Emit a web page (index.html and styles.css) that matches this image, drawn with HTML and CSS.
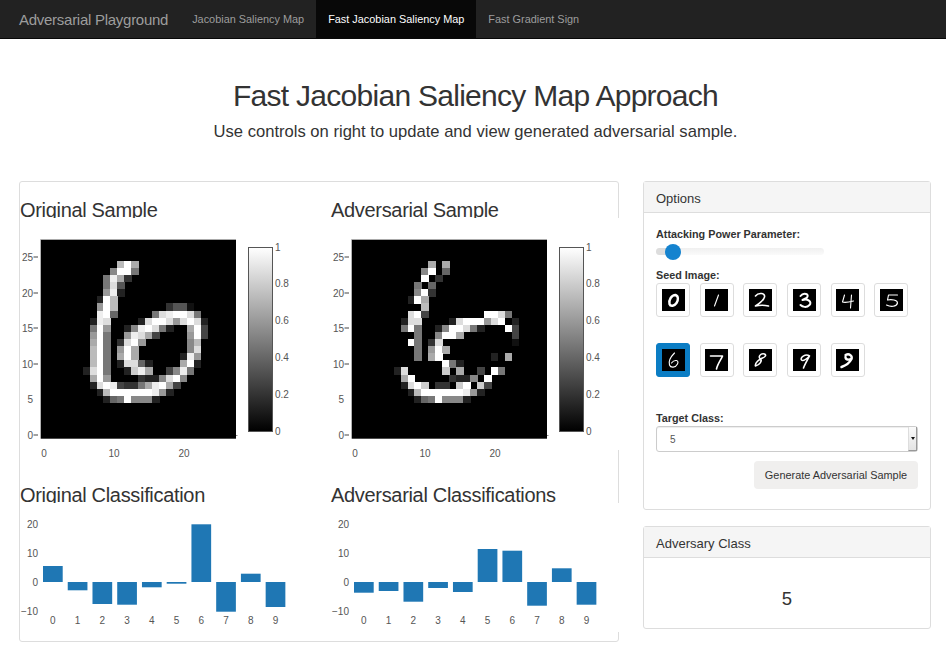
FILE: index.html
```html
<!DOCTYPE html>
<html lang="en">
<head>
<meta charset="utf-8">
<title>Adversarial Playground</title>
<link rel="stylesheet" href="styles.css">
</head>
<body>
<nav class="navbar">
  <a class="brand">Adversarial Playground</a>
  <a class="nav-link">Jacobian Saliency Map</a>
  <a class="nav-link active">Fast Jacobian Saliency Map</a>
  <a class="nav-link">Fast Gradient Sign</a>
</nav>
<header class="hero">
  <h1>Fast Jacobian Saliency Map Approach</h1>
  <p>Use controls on right to update and view generated adversarial sample.</p>
</header>
<main class="layout">
  <section class="plots">
    <div class="plot-cell">
      <h3>Original Sample</h3>
      <svg class="chart heat-chart" viewBox="0 0 290 232">
        <rect class="heat-bg" x="20.7" y="21.3" width="195.3" height="199.4"/>
        <g class="heat-cells" data-set="orig"></g>
        <rect class="heat-top" x="20.7" y="21" width="195.3" height="1"/>
        <rect class="heat-dot" x="216" y="217" width="1.5" height="1"/>
        <rect class="cbar" x="228.5" y="29.5" width="24" height="184"/>
        <g class="tick-marks"><path d="M13.5 39H18M13.5 75H18M13.5 110H18M13.5 146H18M13.5 217H18"/></g>
        <g class="ylabels">
          <text x="13" y="42.5">25</text><text x="13" y="78.5">20</text><text x="13" y="113.5">15</text>
          <text x="13" y="149.5">10</text><text x="13" y="184.5">5</text><text x="13" y="220.5">0</text>
        </g>
        <g class="xlabels"><text x="24" y="238.5">0</text><text x="94" y="238.5">10</text><text x="164" y="238.5">20</text></g>
        <g class="cbar-labels">
          <text x="255" y="32.5">1</text><text x="255" y="68.5">0.8</text><text x="255" y="105.5">0.6</text>
          <text x="255" y="142.5">0.4</text><text x="255" y="179.5">0.2</text><text x="255" y="216.5">0</text>
        </g>
      </svg>
    </div>
    <div class="plot-cell">
      <h3>Adversarial Sample</h3>
      <svg class="chart heat-chart" viewBox="0 0 290 232">
        <rect class="heat-bg" x="20.7" y="21.3" width="195.3" height="199.4"/>
        <g class="heat-cells" data-set="adv"></g>
        <rect class="heat-top" x="20.7" y="21" width="195.3" height="1"/>
        <rect class="heat-dot" x="216" y="217" width="1.5" height="1"/>
        <rect class="cbar" x="228.5" y="29.5" width="24" height="184"/>
        <g class="tick-marks"><path d="M13.5 39H18M13.5 75H18M13.5 110H18M13.5 146H18M13.5 217H18"/></g>
        <g class="ylabels">
          <text x="13" y="42.5">25</text><text x="13" y="78.5">20</text><text x="13" y="113.5">15</text>
          <text x="13" y="149.5">10</text><text x="13" y="184.5">5</text><text x="13" y="220.5">0</text>
        </g>
        <g class="xlabels"><text x="24" y="238.5">0</text><text x="94" y="238.5">10</text><text x="164" y="238.5">20</text></g>
        <g class="cbar-labels">
          <text x="255" y="32.5">1</text><text x="255" y="68.5">0.8</text><text x="255" y="105.5">0.6</text>
          <text x="255" y="142.5">0.4</text><text x="255" y="179.5">0.2</text><text x="255" y="216.5">0</text>
        </g>
      </svg>
    </div>
    <div class="plot-cell">
      <h3>Original Classification</h3>
      <svg class="chart bar-chart" viewBox="0 0 290 129">
        <g class="bars">
          <rect x="23" y="63" width="19.7" height="16"/>
          <rect x="47.74" y="79" width="19.7" height="8.3"/>
          <rect x="72.48" y="79" width="19.7" height="22"/>
          <rect x="97.22" y="79" width="19.7" height="22.7"/>
          <rect x="121.96" y="79" width="19.7" height="5.3"/>
          <rect x="146.7" y="79" width="19.7" height="1.7"/>
          <rect x="171.44" y="21.3" width="19.7" height="57.7"/>
          <rect x="196.18" y="79" width="19.7" height="29.7"/>
          <rect x="220.92" y="70.7" width="19.7" height="8.3"/>
          <rect x="245.66" y="79" width="19.7" height="25"/>
        </g>
        <g class="ylabels">
          <text x="18" y="24.8">20</text><text x="18" y="53.5">10</text><text x="18" y="82.5">0</text><text x="18" y="111.8">−10</text>
        </g>
        <g class="xlabels">
          <text x="32.85" y="120.5">0</text><text x="57.6" y="120.5">1</text><text x="82.3" y="120.5">2</text><text x="107.1" y="120.5">3</text><text x="131.8" y="120.5">4</text>
          <text x="156.5" y="120.5">5</text><text x="181.3" y="120.5">6</text><text x="206" y="120.5">7</text><text x="230.8" y="120.5">8</text><text x="255.5" y="120.5">9</text>
        </g>
      </svg>
    </div>
    <div class="plot-cell">
      <h3>Adversarial Classifications</h3>
      <svg class="chart bar-chart" viewBox="0 0 290 129">
        <g class="bars">
          <rect x="23" y="79" width="19.7" height="10.7"/>
          <rect x="47.74" y="79" width="19.7" height="9"/>
          <rect x="72.48" y="79" width="19.7" height="19.7"/>
          <rect x="97.22" y="79" width="19.7" height="6"/>
          <rect x="121.96" y="79" width="19.7" height="10"/>
          <rect x="146.7" y="46" width="19.7" height="33"/>
          <rect x="171.44" y="47.7" width="19.7" height="31.3"/>
          <rect x="196.18" y="79" width="19.7" height="23.7"/>
          <rect x="220.92" y="65.3" width="19.7" height="13.7"/>
          <rect x="245.66" y="79" width="19.7" height="22.7"/>
        </g>
        <g class="ylabels">
          <text x="18" y="24.8">20</text><text x="18" y="53.5">10</text><text x="18" y="82.5">0</text><text x="18" y="111.8">−10</text>
        </g>
        <g class="xlabels">
          <text x="32.85" y="120.5">0</text><text x="57.6" y="120.5">1</text><text x="82.3" y="120.5">2</text><text x="107.1" y="120.5">3</text><text x="131.8" y="120.5">4</text>
          <text x="156.5" y="120.5">5</text><text x="181.3" y="120.5">6</text><text x="206" y="120.5">7</text><text x="230.8" y="120.5">8</text><text x="255.5" y="120.5">9</text>
        </g>
      </svg>
    </div>
  </section>
  <aside class="sidebar">
    <section class="panel panel-options">
      <div class="panel-heading">Options</div>
      <div class="panel-body options-body">
        <label class="field-label">Attacking Power Parameter:</label>
        <div class="slider"><span class="slider-fill"></span><span class="slider-handle"></span></div>
        <label class="field-label seed-label">Seed Image:</label>
        <div class="seeds">
          <button class="seed"><svg viewBox="0 0 22 22"><path class="d-bold" d="M13 6C9 6 6 11 7 15C8 18 12 17 14 14C16 11 16 7 13 6Z"/></svg></button>
          <button class="seed"><svg viewBox="0 0 22 22"><path class="d-thin" d="M13 6L9 17"/></svg></button>
          <button class="seed"><svg viewBox="0 0 22 22"><path class="d-mid" d="M6 7C9 3 16 4 15 8C14 12 9 15 6 17C10 16 15 16 19 17"/></svg></button>
          <button class="seed"><svg viewBox="0 0 22 22"><path class="d-heavy" d="M7 7C10 3 17 5 13 9L9 11C14 9 19 13 16 16C13 19 9 18 7 16"/></svg></button>
          <button class="seed"><svg viewBox="0 0 22 22"><path class="d-thin" d="M8 6L6 13C9 14 13 13 17 12M15 6L14 19"/></svg></button>
          <button class="seed"><svg viewBox="0 0 22 22"><path class="d-thin" d="M17 6L8 6L7 11C11 10 17 11 17 14C16 18 10 18 6 16"/></svg></button>
          <button class="seed active"><svg viewBox="0 0 22 22"><path class="d-thin" d="M12 4C8 8 6 13 7 16C8 19 13 19 15 15C17 11 12 10 9 14"/></svg></button>
          <button class="seed"><svg viewBox="0 0 22 22"><path class="d-mid" d="M5 7L17 7C16 10 12 15 11 20"/></svg></button>
          <button class="seed"><svg viewBox="0 0 22 22"><path class="d-mid" d="M15 5C11 4 8 8 11 10C13 12 10 16 6 17C5 14 10 10 13 9C16 8 17 6 15 5Z"/></svg></button>
          <button class="seed"><svg viewBox="0 0 22 22"><path class="d-mid" d="M16 7C12 4 6 9 8 11C10 13 14 9 16 7C14 11 11 16 10 19"/></svg></button>
          <button class="seed"><svg viewBox="0 0 22 22"><path class="d-bold" d="M9 6C13 4 16 7 15 10C13 14 8 17 5 18M15 10C12 11 9 11 9 8"/></svg></button>
        </div>
        <label class="field-label target-label">Target Class:</label>
        <div class="select"><span class="select-value">5</span><span class="select-arrow"></span></div>
        <div class="actions"><button class="btn">Generate Adversarial Sample</button></div>
      </div>
    </section>
    <section class="panel panel-result">
      <div class="panel-heading">Adversary Class</div>
      <div class="panel-body result-body">5</div>
    </section>
  </aside>
</main>
<script src="script.js"></script>
</body>
</html>
```
FILE: styles.css
```css
* { box-sizing: border-box; }
body {
  margin: 0;
  background: #fff;
  color: #333;
  font-family: "Liberation Sans", Arial, sans-serif;
  height: 647px;
  overflow: hidden;
}
.navbar {
  display: flex;
  align-items: stretch;
  height: 39px;
  padding-left: 19px;
  background: #222;
  border-bottom: 1px solid #080808;
}
.brand {
  align-self: center;
  margin-right: 12px;
  color: #9d9d9d;
  font-size: 15px;
  letter-spacing: -0.27px;
}
.nav-link {
  display: flex;
  align-items: center;
  padding: 0 12px;
  color: #9d9d9d;
  font-size: 10.9px;
}
.nav-link.active {
  background: #080808;
  color: #fff;
}
.hero {
  height: 142px;
  padding: 42px 0 0 5px;
  text-align: center;
}
.hero h1 {
  margin: 0;
  font-size: 30px;
  font-weight: 400;
  line-height: 30px;
  letter-spacing: -0.72px;
}
.hero p {
  margin: 11px 0 0;
  font-size: 16.6px;
  line-height: 19px;
}
.layout {
  display: flex;
  align-items: flex-start;
  gap: 24px;
  padding-left: 19px;
}
.plots {
  display: grid;
  grid-template-columns: 311px 288px;
  grid-template-rows: 285px auto;
  width: 600px;
  padding: 16px 0 9px;
  background: #fff;
  border: 1px solid #ddd;
  border-radius: 3px;
}
.plot-cell h3 {
  height: 20px;
  margin: 0;
  font-size: 20px;
  font-weight: 400;
  line-height: 25px;
  letter-spacing: -0.32px;
}
.chart {
  display: block;
  position: relative;
  width: 290px;
  overflow: visible;
  background: #fff;
  font-family: "Liberation Sans", Arial, sans-serif;
  font-size: 10px;
}
.heat-chart { height: 232px; }
.bar-chart { height: 129px; }
.heat-bg { fill: #000; }
.heat-cells { shape-rendering: crispEdges; }
.heat-top { fill: #aaa; }
.heat-dot { fill: #888; }
.cbar { fill: url(#cbar-grad); stroke: #555; stroke-width: 1; }
.tick-marks path { stroke: #444; stroke-width: 1; fill: none; }
.ylabels text { fill: #555; text-anchor: end; }
.xlabels text { fill: #555; text-anchor: middle; }
.cbar-labels text { fill: #555; }
.bars rect { fill: #1f77b4; }
.sidebar {
  display: flex;
  flex-direction: column;
  gap: 16px;
  width: 288px;
}
.panel {
  background: #fff;
  border: 1px solid #ddd;
  border-radius: 3px;
}
.panel-heading {
  height: 31px;
  padding-left: 12px;
  background: #f5f5f5;
  border-bottom: 1px solid #ddd;
  font-size: 13px;
  line-height: 33px;
}
.options-body {
  height: 296px;
  padding: 14px 12px 0;
}
.field-label {
  display: block;
  font-size: 10.8px;
  font-weight: 700;
  line-height: 14px;
}
.slider {
  position: relative;
  width: 168px;
  height: 7px;
  margin-top: 7px;
  background: linear-gradient(#f0f0f0, #fafafa);
  border-radius: 4px;
}
.slider-fill {
  position: absolute;
  left: 0;
  top: 0;
  width: 17px;
  height: 7px;
  background: #ddd;
  border-radius: 4px 0 0 4px;
}
.slider-handle {
  position: absolute;
  left: 9px;
  top: -4.5px;
  width: 16px;
  height: 16px;
  background: #1583cf;
  border-radius: 50%;
}
.seed-label { margin-top: 13px; }
.seeds {
  display: grid;
  grid-template-columns: repeat(6, 34px);
  column-gap: 9.7px;
  row-gap: 26px;
  margin-top: 1px;
}
.seed {
  display: flex;
  align-items: center;
  justify-content: center;
  width: 34px;
  height: 34px;
  padding: 0;
  background: #fff;
  border: 1px solid #ddd;
  border-radius: 3px;
}
.seed svg {
  display: block;
  width: 23px;
  height: 22px;
  background: #000;
}
.seed path {
  fill: none;
  stroke: #fff;
  stroke-linecap: round;
  stroke-linejoin: round;
}
.d-thin { stroke-width: 1.1; }
.d-mid { stroke-width: 1.6; }
.d-heavy { stroke-width: 2; }
.d-bold { stroke-width: 2.4; }
.seed.active {
  background: #0b7dc4;
  border-color: #0b7dc4;
}
.target-label { margin-top: 34px; }
.select {
  position: relative;
  display: flex;
  align-items: center;
  width: 262px;
  height: 26px;
  margin-top: 1px;
  padding-left: 13px;
  background: #fff;
  border: 1px solid #ccc;
  border-radius: 3px;
  box-shadow: inset 0 1px 1px rgba(0,0,0,.075);
  font-size: 10px;
  color: #555;
}
.select-arrow {
  position: absolute;
  right: 0;
  top: 0;
  width: 9px;
  height: 24px;
  background: linear-gradient(#fafafa, #e4e4e4);
  border-left: 1px solid #ddd;
  border-right: 1px solid #999;
  border-bottom: 1px solid #999;
}
.select-arrow::after {
  content: "";
  position: absolute;
  left: 1.5px;
  top: 10px;
  border-left: 2.5px solid transparent;
  border-right: 2.5px solid transparent;
  border-top: 3px solid #111;
}
.actions {
  display: flex;
  justify-content: flex-end;
  width: 262px;
  margin-top: 9px;
}
.btn {
  width: 164px;
  height: 28px;
  padding: 0;
  background: #f0efee;
  border: 0;
  border-radius: 4px;
  color: #333;
  font-family: inherit;
  font-size: 10.9px;
}
.result-body {
  height: 70px;
  padding-top: 30px;
  text-align: center;
  font-size: 18.5px;
  line-height: 22px;
}
```
FILE: script.js
```js
// Pixel values of the two 28×28 samples: [row from top, first column, hex greys].
var SAMPLES = {
  orig: [
    [3,11,"bfa"],[4,10,"8ff7"],[5,9,"7ea3"],[6,9,"7d5"],[7,9,"9e2"],[8,8,"2fb"],
    [9,8,"9fb"],[9,18,"3551"],[10,8,"ef6"],[10,16,"7deffd7"],[11,7,"2ed"],[11,14,"2dffd9dfd2"],
    [12,7,"7f9"],[12,12,"28efd72"],[12,21,"af4"],[13,7,"9f7"],[13,12,"9eda4"],[13,21,"9f4"],
    [14,7,"af7"],[14,11,"3df9"],[14,21,"8b"],[15,7,"bf7"],[15,11,"9fa"],[15,21,"8d"],
    [16,7,"bf7"],[16,11,"afa"],[16,20,"2e9"],[17,7,"bf7"],[17,11,"2dd62"],[17,20,"af2"],
    [18,6,"2df7"],[18,12,"2cea"],[18,18,"48e7"],[19,7,"af9"],[19,14,"3228df8"],
    [20,7,"2dfe4337aefa4"],[21,8,"2bffffffe92"],[22,9,"267f8882"]
  ],
  adv: [
    [3,11,"a.a"],[4,10,"8f.6"],[5,10,"f.3"],[6,9,"7.6"],[7,9,"8f3"],[8,8,"2fa"],[9,10,"b"],
    [10,8,"df4"],[10,19,"ffd7"],[11,7,"2dd"],[11,14,"2dfff9df.2"],[12,7,"7f7"],[12,12,"28ffd72"],
    [12,22,"f4"],[13,9,"7"],[13,12,"8ffa"],[13,23,"4"],[14,8,"f7"],[14,11,"3d"],[14,23,"1"],
    [15,9,"7"],[15,11,"9fa"],[16,9,"7"],[16,11,"af"],[16,20,"2.a"],[17,13,"f72"],[18,6,"2d"],
    [18,13,"c.a"],[18,18,"4.f7"],[19,7,"af"],[19,14,"3228.f"],[20,7,"2dfc"],[20,12,"33.cf.c4"],
    [21,8,"2bffffffe92"],[22,9,"267f8882"]
  ]
};
var NS = "http://www.w3.org/2000/svg";
var CELL_W = 195.3 / 28, CELL_H = 199.4 / 28, LEFT = 20.7, TOP = 21.3;

document.querySelectorAll(".heat-cells").forEach(function (group) {
  SAMPLES[group.dataset.set].forEach(function (run) {
    run[2].split("").forEach(function (ch, i) {
      if (ch === ".") return;
      var v = parseInt(ch, 16) * 17;
      var r = document.createElementNS(NS, "rect");
      r.setAttribute("x", LEFT + (run[1] + i) * CELL_W);
      r.setAttribute("y", TOP + run[0] * CELL_H);
      r.setAttribute("width", CELL_W + 0.3);
      r.setAttribute("height", CELL_H + 0.3);
      r.setAttribute("fill", "rgb(" + v + "," + v + "," + v + ")");
      group.appendChild(r);
    });
  });
});

// Shared colour-bar gradient: black at the bottom, white at the top.
var defs = document.createElementNS(NS, "svg");
defs.setAttribute("width", "0");
defs.setAttribute("height", "0");
defs.style.position = "absolute";
defs.innerHTML = '<defs><linearGradient id="cbar-grad" x1="0" y1="1" x2="0" y2="0">' +
  '<stop offset="0" stop-color="#000"/><stop offset="1" stop-color="#fff"/></linearGradient></defs>';
document.body.appendChild(defs);
```
